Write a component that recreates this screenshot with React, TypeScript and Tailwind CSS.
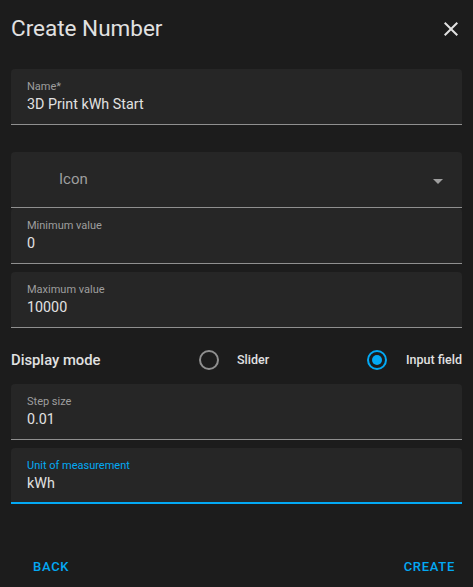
import React from "react";

const Field = ({ label, value, focused = false, className = "" }) => {
  return (
    <div
      className={
        "h-[56px] rounded-t-[4px] bg-[#262626] px-[16px] pt-[11px] " +
        (focused ? "border-b-2 border-[#03a9f4] " : "border-b border-[#8f8f8f] ") +
        className
      }
    >
      <div className={"text-[11px] leading-[14px] " + (focused ? "text-[#03a9f4]" : "text-[#9e9e9e]")}>
        {label}
      </div>
      <div className="text-[14.3px] leading-[20px] text-[#e1e1e1]">{value}</div>
    </div>
  );
};

const Radio = ({ checked }) => {
  return (
    <span
      className={
        "flex h-[20px] w-[20px] items-center justify-center rounded-full border-2 " +
        (checked ? "border-[#03a9f4]" : "border-[#8f8f8f]")
      }
    >
      {checked && <span className="h-[10px] w-[10px] rounded-full bg-[#03a9f4]" />}
    </span>
  );
};

const App = () => {
  return (
    <div className="flex h-[587px] w-[473px] flex-col bg-[#1c1c1c] font-['Roboto',sans-serif]">
      <div className="flex h-[58px] items-center justify-between pl-[11px] pr-[10px]">
        <h2 className="text-[22.5px] text-[#e1e1e1]">Create Number</h2>
        <svg viewBox="0 0 24 24" className="h-[24px] w-[24px] fill-[#e1e1e1]">
          <path d="M19,6.41L17.59,5L12,10.59L6.41,5L5,6.41L10.59,12L5,17.59L6.41,19L12,13.41L17.59,19L19,17.59L13.41,12L19,6.41Z" />
        </svg>
      </div>

      <div className="mt-[11px] flex flex-col px-[11px]">
        <Field label="Name*" value="3D Print kWh Start" />

        <div className="mt-[27px] flex h-[56px] items-center rounded-t-[4px] border-b border-[#8f8f8f] bg-[#262626] pl-[48px] pr-[19px]">
          <span className="flex-1 text-[15px] text-[#9e9e9e]">Icon</span>
          <span className="mt-[4px] h-0 w-0 border-x-[5px] border-t-[5px] border-x-transparent border-t-[#9e9e9e]" />
        </div>

        <Field label="Minimum value" value="0" />
        <Field label="Maximum value" value="10000" className="mt-[8px]" />

        <div className="flex h-[56px] items-center pt-[8px]">
          <span className="w-[188px] text-[14.8px] font-medium text-[#e1e1e1]">Display mode</span>
          <Radio checked={false} />
          <span className="ml-[18px] text-[12.5px] font-medium text-[#e1e1e1]">Slider</span>
          <span className="ml-auto flex items-center">
            <Radio checked={true} />
            <span className="ml-[19px] text-[12.5px] font-medium text-[#e1e1e1]">Input field</span>
          </span>
        </div>

        <Field label="Step size" value="0.01" />
        <Field label="Unit of measurement" value="kWh" focused className="mt-[8px]" />
      </div>

      <div className="mt-[44px] flex h-[37px] items-center justify-between pl-[25px] pr-[10px]">
        <button className="px-[8px] text-[13px] font-medium tracking-[0.7px] text-[#03a9f4]">BACK</button>
        <button className="px-[8px] text-[13px] font-medium tracking-[0.7px] text-[#03a9f4]">CREATE</button>
      </div>
    </div>
  );
};

export default App;
